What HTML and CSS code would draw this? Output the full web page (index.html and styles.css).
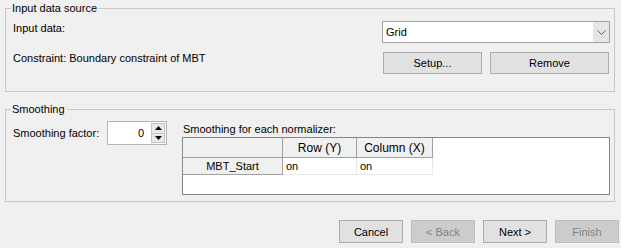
FILE: index.html
```html
<html>
	<head>
		<title>Normalization Wizard</title>
		<link rel="stylesheet" href="styles.css">
	</head>
	<body>
		<fieldset class="group first">
			<legend>Input data source</legend>
			<div class="source">
				<span class="lbl top">Input data:</span>
				<div class="combo">
					<span class="combo-text">Grid</span>
					<span class="combo-arrow">
						<svg width="9" height="5" viewBox="0 0 9 5"><polyline points="0.5,0.5 4.5,4.5 8.5,0.5" fill="none" stroke="#606060" stroke-width="1"/></svg>
					</span>
				</div>
				<span class="lbl">Constraint: Boundary constraint of MBT</span>
				<div class="pair">
					<button class="btn setup">Setup...</button>
					<button class="btn remove">Remove</button>
				</div>
			</div>
		</fieldset>
		<fieldset class="group second">
			<legend>Smoothing</legend>
			<div class="smooth">
				<div class="factor">
					<span class="lbl wide">Smoothing factor:</span>
					<div class="spin">
						<span class="spin-value">0</span>
						<span class="spin-btns">
							<span class="spin-btn"><svg width="7" height="4" viewBox="0 0 7 4"><polygon points="0,4 3.5,0 7,4" fill="#000"/></svg></span>
							<span class="spin-btn"><svg width="7" height="4" viewBox="0 0 7 4"><polygon points="0,0 7,0 3.5,4" fill="#000"/></svg></span>
						</span>
					</div>
				</div>
				<div class="normal">
					<div class="cap">Smoothing for each normalizer:</div>
					<div class="grid">
						<table class="cells">
							<thead>
								<tr class="head">
									<th class="corner"></th>
									<th class="c1">Row (Y)</th>
									<th class="c2">Column (X)</th>
								</tr>
							</thead>
							<tbody>
								<tr class="row">
									<th class="rowhead">MBT_Start</th>
									<td>on</td>
									<td>on</td>
								</tr>
							</tbody>
						</table>
					</div>
				</div>
			</div>
		</fieldset>
		<div class="footer">
			<button class="btn">Cancel</button>
			<button class="btn" disabled>&lt; Back</button>
			<button class="btn">Next &gt;</button>
			<button class="btn" disabled>Finish</button>
		</div>
	</body>
</html>
```

FILE: styles.css
```css
body {
	margin: 0;
	padding: 2px 6px 0 5px;
	background: #f0f0f0;
	font: 11px "Liberation Sans", Arial, sans-serif;
	color: #000;
}
.group {
	margin: 0;
	padding: 0 4px 17px 5px;
	border: 1px solid #c9c9c9;
	min-width: 0;
}
.group legend {
	padding: 0 2px 0 1px;
	line-height: 13px;
}
.second {
	margin-top: 11px;
	padding-bottom: 6px;
}
.lbl {
	line-height: 13px;
	padding-left: 2px;
	align-self: start;
}
.lbl.top {
	padding-top: 1px;
}
.source {
	display: grid;
	grid-template-columns: 1fr 228px;
	grid-template-rows: 22px 22px;
	row-gap: 9px;
	margin-top: 6px;
}
.combo {
	display: flex;
	border: 1px solid #a2a2a2;
	background: #fff;
}
.combo-text {
	flex: 1;
	padding-left: 3px;
	line-height: 20px;
}
.combo-arrow {
	width: 16px;
	background: #e6e6e6;
	display: flex;
	align-items: center;
	justify-content: center;
}
.pair {
	display: flex;
	gap: 8px;
	padding: 0 1px;
}
.btn {
	font: inherit;
	color: #000;
	background: #e1e1e1;
	border: 1px solid #adadad;
	padding: 0;
	margin: 0;
	height: 22px;
}
.btn:disabled {
	background: #cccccc;
	border-color: #bfbfbf;
	color: #838383;
}
.setup {
	width: 99px;
}
.remove {
	flex: 1;
}
.smooth {
	display: flex;
	align-items: flex-start;
}
.factor {
	display: flex;
	align-items: center;
	width: 156px;
	margin: 5px 15px 0 0;
}
.lbl.wide {
	width: 94px;
	align-self: center;
}
.spin {
	display: flex;
	width: 60px;
	height: 24px;
	box-sizing: border-box;
	border: 1px solid #b4b4b4;
	background: #fff;
}
.spin-value {
	flex: 1;
	text-align: right;
	padding-right: 7px;
	line-height: 22px;
}
.spin-btns {
	display: flex;
	flex-direction: column;
	width: 14px;
	margin: 1px 1px 1px 0;
}
.spin-btn {
	flex: 1;
	display: flex;
	align-items: center;
	justify-content: center;
	background: #e8e8e8;
	border: 1px solid #c4c4c4;
}
.spin-btn + .spin-btn {
	border-top: none;
}
.normal {
	flex: 1;
	margin-top: 7px;
}
.cap {
	line-height: 13px;
	padding-left: 1px;
	margin-bottom: 1px;
}
.grid {
	height: 58px;
	box-sizing: border-box;
	border: 1px solid #828790;
	background: #fff;
}
.cells {
	font: inherit;
	border-collapse: separate;
	border-spacing: 0;
	table-layout: fixed;
	width: 250px;
}
.cells th {
	font-weight: normal;
	background: #f0f0f0;
	border-right: 1px solid #a0a0a0;
	border-bottom: 1px solid #a0a0a0;
	padding: 0;
	text-align: center;
}
.cells thead th {
	font-size: 12px;
}
.cells td {
	border-right: 1px solid #e8e8e8;
	border-bottom: 1px solid #e8e8e8;
	padding: 0 0 0 3px;
}
.corner {
	width: 99px;
}
.c1 {
	width: 73px;
}
.c2 {
	width: 75px;
}
.head {
	height: 20px;
}
.row {
	height: 17px;
}
.footer {
	display: flex;
	justify-content: flex-end;
	gap: 8px;
	margin: 18px -4px 0 0;
}
.footer .btn {
	width: 64px;
	height: 23px;
}
```
